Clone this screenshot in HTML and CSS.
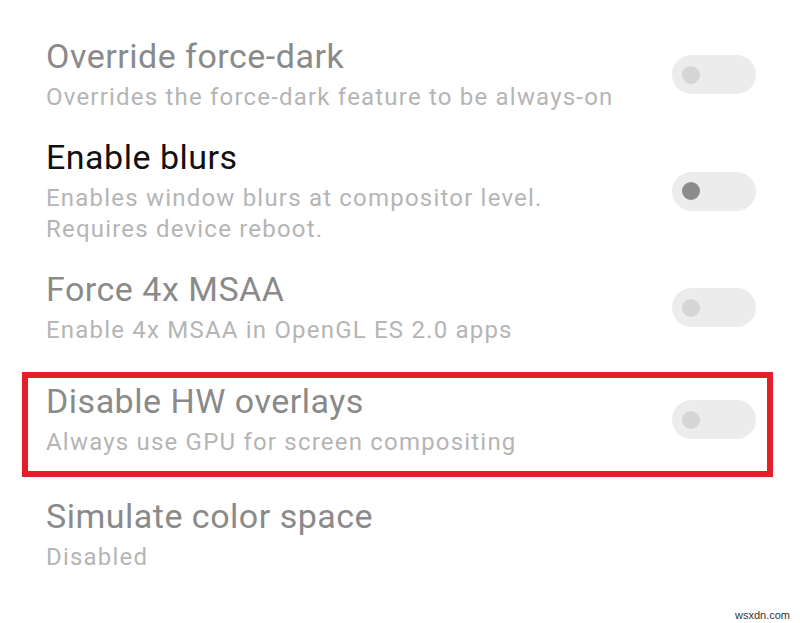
FILE: index.html
```html
<!DOCTYPE html>
<html lang="en">
<head>
    <meta charset="UTF-8">
    <meta name="viewport" content="width=device-width, initial-scale=1.0">
    <title>Developer options</title>
    <link rel="stylesheet" href="styles.css">
</head>
<body>
    <div class="settings">
        <div class="item">
            <div class="text">
                <div class="title">Override force-dark</div>
                <div class="summary">Overrides the force-dark feature to be always-on</div>
            </div>
            <div class="switch"><span class="knob"></span></div>
        </div>
        <div class="item enabled">
            <div class="text">
                <div class="title">Enable blurs</div>
                <div class="summary">Enables window blurs at compositor level.<br>Requires device reboot.</div>
            </div>
            <div class="switch"><span class="knob"></span></div>
        </div>
        <div class="item">
            <div class="text">
                <div class="title">Force 4x MSAA</div>
                <div class="summary">Enable 4x MSAA in OpenGL ES 2.0 apps</div>
            </div>
            <div class="switch"><span class="knob"></span></div>
        </div>
        <div class="item marked">
            <div class="text">
                <div class="title">Disable HW overlays</div>
                <div class="summary">Always use GPU for screen compositing</div>
            </div>
            <div class="switch"><span class="knob"></span></div>
        </div>
        <div class="item last">
            <div class="text">
                <div class="title">Simulate color space</div>
                <div class="summary">Disabled</div>
            </div>
        </div>
    </div>
    <div class="watermark">wsxdn.com</div>
</body>
</html>
```

FILE: styles.css
```css
body {
    font-family: 'Roboto', 'Liberation Sans', sans-serif;
    background-color: #ffffff;
    margin: 0;
    width: 800px;
    height: 623px;
    overflow: hidden;
    position: relative;
}
.settings {
    padding: 24px 44px 0 46px;
}
.item {
    display: flex;
    align-items: center;
    justify-content: space-between;
    padding: 12px 0;
}
.title {
    font-size: 34px;
    line-height: 40px;
    letter-spacing: 0.5px;
    margin-bottom: 6px;
    color: #8a8a8a;
}
.item.enabled .title {
    color: #111111;
}
.summary {
    font-size: 24px;
    line-height: 31px;
    letter-spacing: 1.2px;
    color: #b5b5b5;
}
.item.marked {
    border: 6px solid #e31f29;
    margin: 14px -17px 7px -24px;
    padding: 3px 11px 13px 18px;
}
.switch {
    width: 84px;
    height: 39px;
    border-radius: 20px;
    background-color: #ececec;
    display: flex;
    align-items: center;
    padding-left: 10px;
    box-sizing: border-box;
    flex-shrink: 0;
}
.knob {
    width: 18px;
    height: 18px;
    border-radius: 50%;
    background-color: #d5d5d5;
}
.item.enabled .knob {
    background-color: #8c8c8c;
}
.watermark {
    position: absolute;
    right: 10px;
    bottom: 2px;
    font-family: 'Liberation Sans', sans-serif;
    font-size: 11px;
    color: #333;
}
```
